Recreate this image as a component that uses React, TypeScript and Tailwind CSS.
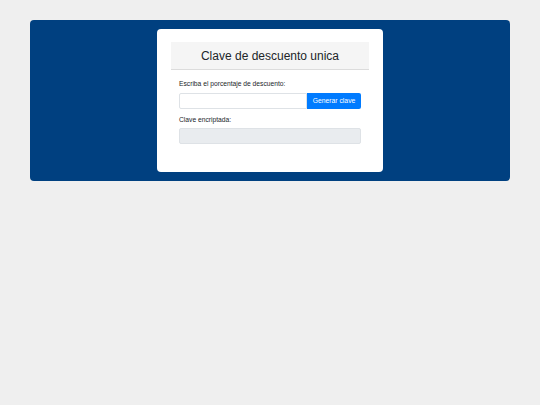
export default function App() {
  return (
    <div className="min-h-[405px] w-[540px] bg-[#efefef] pt-[20px] px-[30px]" style={{ fontFamily: '"Liberation Sans", Arial, sans-serif' }}>
      <div className="bg-[#004080] rounded-[4px] h-[161px] flex justify-center pt-[9px]">
        <div className="w-[226px] h-[143px] bg-white rounded-[4px] pt-[13px] px-[14px]">
          <div className="bg-[#f5f5f5] border-b border-[#dcdcdc] h-[28px] flex items-center justify-center">
            <h1 className="text-[12px] text-[#212529] leading-none">Clave de descuento unica</h1>
          </div>
          <div className="px-[8px] pt-[11px]">
            <label className="block text-[6.7px] text-[#212529] leading-none">Escriba el porcentaje de descuento:</label>
            <div className="flex mt-[5px] h-[16px]">
              <input className="flex-1 min-w-0 border border-[#dee2e6] rounded-l-[2px] bg-white outline-none" />
              <button className="w-[54px] bg-[#007bff] text-white text-[6.8px] rounded-r-[2px]">Generar clave</button>
            </div>
            <label className="block text-[6.7px] text-[#212529] leading-none mt-[8px]">Clave encriptada:</label>
            <div className="mt-[5px] h-[16px] bg-[#e9ecef] border border-[#dee2e6] rounded-[2px]"></div>
          </div>
        </div>
      </div>
    </div>
  );
}
